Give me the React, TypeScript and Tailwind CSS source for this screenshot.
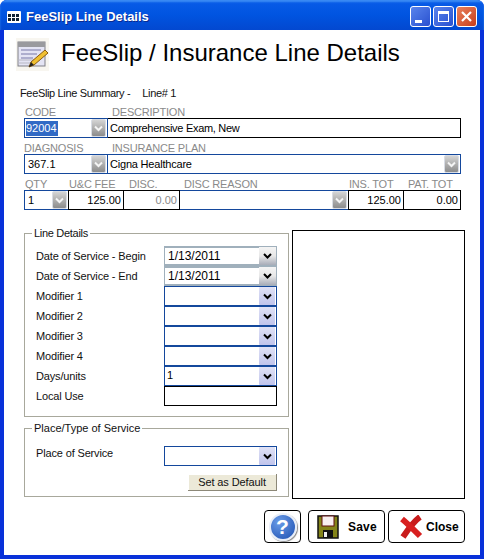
const sans = "font-['Liberation_Sans',Arial,sans-serif]";

function GrayArrow() {
  return (
    <div className="mr-px flex h-[18px] w-[15px] shrink-0 items-center justify-center rounded-[2px] border border-[#d8dce4] bg-gradient-to-b from-[#d4d4d4] to-[#8c8c8c]">
      <svg width="9" height="7" viewBox="0 0 9 7" fill="none">
        <path d="M1 1.5 L4.5 5 L8 1.5" stroke="#f4f4f4" strokeWidth="2" />
      </svg>
    </div>
  );
}

function BlueArrow() {
  return (
    <div className="flex h-[18px] w-[16px] shrink-0 items-center justify-center rounded-[1px] bg-gradient-to-b from-[#e0e2f6] to-[#c0c4ec]">
      <svg width="9" height="7" viewBox="0 0 9 7" fill="none">
        <path d="M1 1.5 L4.5 5 L8 1.5" stroke="#000" strokeWidth="2" />
      </svg>
    </div>
  );
}

function DateArrow() {
  return (
    <div className="flex h-[18px] w-[17px] shrink-0 items-center justify-center bg-gradient-to-b from-[#f4f4f4] via-[#e8e8e8] to-[#a8acb8]">
      <svg width="9" height="7" viewBox="0 0 9 7" fill="none">
        <path d="M1 1 L4.5 4.5 L8 1" stroke="#000" strokeWidth="2" />
      </svg>
    </div>
  );
}

function FieldLabel({ text, pad }: { text: string; pad: string }) {
  return (
    <div className={`h-3 whitespace-nowrap text-[11px] leading-[12px] tracking-[-0.2px] text-[#8a8a8a] ${pad}`}>
      {text}
    </div>
  );
}

function DetailRow({ label, children }: { label: string; children: React.ReactNode }) {
  return (
    <div className="flex h-5 items-center">
      <div className="w-[128px] text-[11px] tracking-[-0.15px] text-[#111]">{label}</div>
      {children}
    </div>
  );
}

function DateBox({ value }: { value: string }) {
  return (
    <div className="flex h-5 w-[113px] items-center justify-between border-2 border-r border-l border-[#a0b0bc] bg-white pl-[3px] text-[12px] leading-[12px] text-black">
      <span className="-mt-px">{value}</span>
      <DateArrow />
    </div>
  );
}

function ComboBox({ value = "" }: { value?: string }) {
  return (
    <div className="flex h-5 w-[113px] items-center justify-between border border-[#14489c] bg-white pr-px pl-0.5 text-[11px] leading-[12px] text-black">
      <span className="-mt-0.5">{value}</span>
      <BlueArrow />
    </div>
  );
}

function TitleButton({ color, children }: { color: string; children: React.ReactNode }) {
  return (
    <div className={`flex h-[21px] w-[21px] items-center justify-center rounded-[3px] border border-white ${color}`}>
      {children}
    </div>
  );
}

export default function App() {
  return (
    <div className={`flex h-[559px] w-[484px] flex-col overflow-hidden rounded-t-[7px] bg-[#0831d9] ${sans}`}>
      {/* title bar */}
      <div className="flex h-[30px] shrink-0 items-center bg-gradient-to-b from-[#0a5ce8] via-[#0054e0] to-[#0348d0] px-[7px] pt-[3px] shadow-[inset_0_2px_2px_#3c8cf4]">
        <svg width="14" height="12" viewBox="0 0 14 12" className="shrink-0">
          <rect x="0" y="0" width="14" height="12" rx="1" fill="#fff" />
          <rect x="1" y="3" width="3" height="3" fill="#123" />
          <rect x="5" y="3" width="3" height="3" fill="#123" />
          <rect x="9" y="3" width="3" height="3" fill="#123" />
          <rect x="1" y="7" width="3" height="3" fill="#123" />
          <rect x="5" y="7" width="3" height="3" fill="#123" />
          <rect x="9" y="7" width="3" height="3" fill="#123" />
        </svg>
        <div className="ml-[5px] text-[13px] font-bold text-white [text-shadow:1px_1px_0_#0a2a90]">FeeSlip Line Details</div>
        <div className="ml-auto flex gap-[2px]">
          <TitleButton color="bg-gradient-to-br from-[#5a84ec] to-[#2a50d0]">
            <div className="mt-[10px] mr-[5px] h-[3px] w-[7px] bg-white" />
          </TitleButton>
          <TitleButton color="bg-gradient-to-br from-[#5a84ec] to-[#2a50d0]">
            <div className="h-[11px] w-[11px] border border-t-[3px] border-white" />
          </TitleButton>
          <TitleButton color="bg-gradient-to-br from-[#e8805c] to-[#c83c18]">
            <svg width="13" height="13" viewBox="0 0 13 13">
              <path d="M2 2 L11 11 M11 2 L2 11" stroke="#fff" strokeWidth="2.2" />
            </svg>
          </TitleButton>
        </div>
      </div>

      {/* client area */}
      <div className="mx-1 flex h-[525px] flex-col bg-white pl-5 text-black">
        <div className="flex h-[56px] shrink-0 items-start pt-2">
          <div className="-ml-2 flex h-[33px] w-[33px] shrink-0 items-center justify-center bg-[#f8f6f0]">
            <svg width="31" height="29" viewBox="0 0 31 29">
              <rect x="1" y="2" width="27" height="24" fill="#e4e4f4" stroke="#808088" />
              <rect x="1" y="2" width="27" height="5" fill="#9a9a9e" />
              <path d="M4 10 H24 M4 14 H20 M4 18 H16" stroke="#7878a8" strokeWidth="1" />
              <path d="M1 20 H18 M1 23 H14" stroke="#b8b8c4" strokeWidth="1" />
              <path d="M28 10 L31 13 L17 25 L12 27 L14 22 Z" fill="#f0c030" stroke="#8a5a10" strokeWidth="1" />
              <path d="M12 27 L14 22 L17 25 Z" fill="#222" />
            </svg>
          </div>
          <div className="ml-3 text-[24px] leading-[30px] whitespace-nowrap">FeeSlip / Insurance Line Details</div>
        </div>

        <div className="-ml-1 flex h-[14px] items-center text-[11px] tracking-[-0.35px] whitespace-pre text-[#111]">
          <span>FeeSlip Line Summary -</span>
          <span className="ml-3">Line# 1</span>
        </div>

        <div className="mt-1.5 flex flex-col gap-1 text-[11px]">
          <div className="grid grid-cols-[84px_353px]">
            <FieldLabel text="CODE" pad="pl-px" />
            <FieldLabel text="DESCRIPTION" pad="pl-1" />
            <div className="flex h-5 items-center justify-between border border-[#14489c] bg-white pl-px">
              <span className="bg-[#316ac5] pr-px leading-[15px] text-white">92004</span>
              <GrayArrow />
            </div>
            <div className="flex h-5 items-center border border-l-0 border-black pl-0.5 tracking-[-0.3px]">Comprehensive Exam, New</div>
          </div>

          <div className="grid grid-cols-[84px_353px]">
            <FieldLabel text="DIAGNOSIS" pad="" />
            <FieldLabel text="INSURANCE PLAN" pad="pl-1" />
            <div className="flex h-5 items-center justify-between border border-[#14489c] pl-[3px]">
              <span>367.1</span>
              <GrayArrow />
            </div>
            <div className="flex h-5 items-center justify-between border border-l-0 border-[#14489c] pl-0.5">
              <span className="tracking-[-0.2px]">Cigna Healthcare</span>
              <GrayArrow />
            </div>
          </div>

          <div className="grid grid-cols-[44px_56px_56px_168px_56px_57px]">
            <FieldLabel text="QTY" pad="pl-px" />
            <FieldLabel text="U&C FEE" pad="pl-px" />
            <FieldLabel text="DISC." pad="pl-[5px]" />
            <FieldLabel text="DISC REASON" pad="pl-1" />
            <FieldLabel text="INS. TOT" pad="pl-px" />
            <FieldLabel text="PAT. TOT" pad="pl-1" />
            <div className="flex h-5 items-center justify-between border border-r-0 border-[#14489c] pl-[3px]">
              <span>1</span>
              <GrayArrow />
            </div>
            <div className="flex h-5 items-center justify-end border border-black pr-0.5">125.00</div>
            <div className="flex h-5 items-center justify-end border border-l-0 border-black pr-0.5 text-[#8a8a8a]">0.00</div>
            <div className="flex h-5 items-center justify-end border-y border-[#14489c]">
              <GrayArrow />
            </div>
            <div className="flex h-5 items-center justify-end border border-black pr-0.5">125.00</div>
            <div className="flex h-5 items-center justify-end border border-l-0 border-black pr-0.5">0.00</div>
          </div>
        </div>

        <div className="mt-4 flex items-start gap-1">
          <div className="flex w-[264px] shrink-0 flex-col">
            <fieldset className="border border-[#a8a89c] px-[11px] pt-1.5 pb-[10px]">
              <legend className="-ml-1 px-0.5 text-[11px] leading-[14px] tracking-[-0.3px] text-[#111]">Line Details</legend>
              <DetailRow label="Date of Service - Begin"><DateBox value="1/13/2011" /></DetailRow>
              <DetailRow label="Date of Service - End"><DateBox value="1/13/2011" /></DetailRow>
              <DetailRow label="Modifier 1"><ComboBox /></DetailRow>
              <DetailRow label="Modifier 2"><ComboBox /></DetailRow>
              <DetailRow label="Modifier 3"><ComboBox /></DetailRow>
              <DetailRow label="Modifier 4"><ComboBox /></DetailRow>
              <DetailRow label="Days/units"><ComboBox value="1" /></DetailRow>
              <DetailRow label="Local Use">
                <div className="h-5 w-[113px] border border-black" />
              </DetailRow>
            </fieldset>
            <fieldset className="mt-1 border border-[#a8a89c] px-[11px] pt-[11px] pb-[5px]">
              <legend className="-ml-1 px-0.5 text-[11px] leading-[14px] text-[#111]">Place/Type of Service</legend>
              <div className="flex h-5 items-start">
                <div className="w-[128px] text-[11px] leading-[14px] tracking-[-0.15px] text-[#111]">Place of Service</div>
                <ComboBox />
              </div>
              <div className="mt-2 flex justify-end">
                <button className="h-[17px] w-[89px] border-r border-b border-[#8c8878] bg-[#ece9d8] text-[11px] leading-[14px] tracking-[-0.1px] text-[#111] shadow-[inset_1px_1px_0_#fff]">
                  Set as Default
                </button>
              </div>
            </fieldset>
          </div>
          <div className="mt-1 h-[269px] w-[173px] shrink-0 border border-black" />
        </div>

        <div className="mt-[11px] flex w-[441px] justify-end">
          <button className="flex h-[33px] w-[37px] items-center justify-center rounded-[4px] border border-black">
            <div className="flex h-[28px] w-[28px] items-center justify-center rounded-full border-2 border-[#e8eef8] bg-[radial-gradient(circle_at_35%_30%,#6a9ce8,#1c4fb0)] text-[21px] leading-none font-bold text-white shadow-[1px_1px_1px_#888]">
              ?
            </div>
          </button>
          <button className="ml-[7px] flex h-[33px] w-[77px] items-center rounded-[4px] border border-black pl-2 text-[12px] font-bold tracking-[0.2px]">
            <svg width="22" height="24" viewBox="0 0 22 24" className="shrink-0">
              <path d="M1 1 H21 V23 H1 Z" fill="#848418" stroke="#111" strokeWidth="1.5" />
              <rect x="5" y="1" width="12" height="10" fill="#f8f0f0" stroke="#601010" strokeWidth="1" />
              <rect x="6" y="15" width="10" height="8" fill="#111" />
              <rect x="7" y="17" width="3" height="5" fill="#f0f0f0" />
            </svg>
            <span className="ml-[9px]">Save</span>
          </button>
          <button className="ml-[3px] flex h-[33px] w-[77px] items-center rounded-[4px] border border-black pl-[10px] text-[12px] font-bold">
            <svg width="24" height="24" viewBox="0 0 24 24" className="shrink-0">
              <path d="M21 2 C15 6 10 13 4 22" stroke="#c81c1c" strokeWidth="6" fill="none" />
              <path d="M3 4 C8 8 15 15 21 21" stroke="#d82020" strokeWidth="6" fill="none" />
            </svg>
            <span className="ml-[3px]">Close</span>
          </button>
        </div>
      </div>
    </div>
  );
}
